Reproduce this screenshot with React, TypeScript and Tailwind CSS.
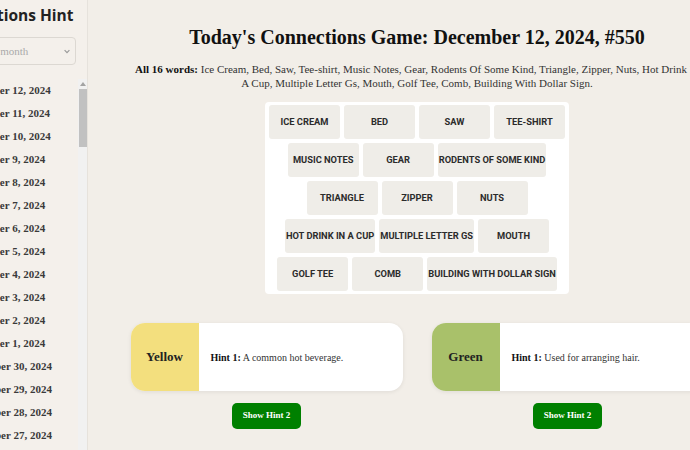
const dates = [
  "December 12, 2024",
  "December 11, 2024",
  "December 10, 2024",
  "December 9, 2024",
  "December 8, 2024",
  "December 7, 2024",
  "December 6, 2024",
  "December 5, 2024",
  "December 4, 2024",
  "December 3, 2024",
  "December 2, 2024",
  "December 1, 2024",
  "November 30, 2024",
  "November 29, 2024",
  "November 28, 2024",
  "November 27, 2024",
];

const rows = [
  ["Ice Cream", "Bed", "Saw", "Tee-shirt"],
  ["Music Notes", "Gear", "Rodents Of Some Kind"],
  ["Triangle", "Zipper", "Nuts"],
  ["Hot Drink In A Cup", "Multiple Letter Gs", "Mouth"],
  ["Golf Tee", "Comb", "Building With Dollar Sign"],
];

const hints = [
  { label: "Yellow", color: "bg-[#f3df7e]", hint: "A common hot beverage." },
  { label: "Green", color: "bg-[#a9c16a]", hint: "Used for arranging hair." },
];

const serif = "font-['Liberation_Serif',serif]";

function Sidebar() {
  return (
    <aside className="w-[88px] shrink-0 h-full overflow-hidden bg-[#f4f0eb] border-r border-[#e6e2dc]">
      <div className="w-[250px] -ml-[162px] h-full flex flex-col">
        <h2 className="pl-[102px] pt-[4px] h-[37px] whitespace-nowrap text-[15.5px] font-bold text-[#222] font-['Open_Sans',sans-serif]">
          Connections Hint
        </h2>
        <div className="pl-[110px] pr-[12px]">
          <div className={`h-[28px] rounded border border-[#dcd8d2] flex items-center justify-between pl-[14px] pr-[4px] text-[11px] text-[#aaa] ${serif}`}>
            <span>Select a month</span>
            <svg width="8" height="8" viewBox="0 0 10 10" fill="none" stroke="#999" strokeWidth="1.5">
              <path d="M2 4l3 3 3-3" />
            </svg>
          </div>
        </div>
        <div className="flex flex-1 mt-[14px] min-h-0">
          <ul className={`flex-1 pl-[124px] text-[11px] font-bold text-[#3a3a3a] ${serif}`}>
            {dates.map((d) => (
              <li key={d} className="h-[23px] leading-[23px] whitespace-nowrap">
                {d}
              </li>
            ))}
          </ul>
          <div className="w-[10px] bg-[#f1f1f1] flex flex-col items-center">
            <svg width="6" height="4" viewBox="0 0 6 4" className="mt-[3px]">
              <path d="M3 0l3 4H0z" fill="#a3a3a3" />
            </svg>
            <div className="w-[8px] h-[58px] mt-[3px] bg-[#c1c1c1]" />
          </div>
        </div>
      </div>
    </aside>
  );
}

function Tile({ word }: { word: string }) {
  return (
    <div className="min-w-[71px] h-[34px] px-[1px] rounded-[3px] bg-[#efede8] flex items-center justify-center whitespace-nowrap text-[9.3px] font-bold uppercase text-[#2b2b2b] font-['Roboto',sans-serif]">
      {word}
    </div>
  );
}

function HintCard({ label, color, hint }: { label: string; color: string; hint: string }) {
  return (
    <div className="flex flex-col items-center">
      <div className="w-full h-[68px] flex rounded-[14px] overflow-hidden bg-white shadow-[0_1px_4px_rgba(0,0,0,0.08)]">
        <div className={`w-[68px] shrink-0 ${color} flex items-center justify-center text-[13px] font-bold text-[#222]`}>
          {label}
        </div>
        <div className="flex items-center pl-[12px] text-[10px] text-[#333]">
          <p>
            <b className="text-[#111]">Hint 1:</b> {hint}
          </p>
        </div>
      </div>
      <button className="mt-[12px] w-[69px] h-[26px] rounded-[5px] bg-[#008000] text-white text-[9px] font-bold">
        Show Hint 2
      </button>
    </div>
  );
}

export default function App() {
  return (
    <div className={`w-[690px] h-[450px] overflow-hidden flex bg-[#f2eee8] ${serif}`}>
      <Sidebar />
      <main className="w-[658px] shrink-0 flex flex-col items-center pt-[24px]">
        <h1 className="text-[20px] font-bold text-[#111] leading-[26px]">
          Today's Connections Game: December 12, 2024, #550
        </h1>
        <p className="mt-[12px] w-[572px] text-center text-[11px] leading-[14px] text-[#333]">
          <b className="text-[#111]">All 16 words:</b> Ice Cream, Bed, Saw, Tee-shirt, Music Notes, Gear, Rodents Of Some Kind, Triangle, Zipper, Nuts, Hot Drink In A Cup, Multiple Letter Gs, Mouth, Golf Tee, Comb, Building With Dollar Sign.
        </p>
        <div className="mt-[12px] w-[304px] bg-white rounded-[4px] p-[3px] flex flex-col gap-[4px]">
          {rows.map((r, i) => (
            <div key={i} className="flex justify-center gap-[4px]">
              {r.map((w) => (
                <Tile key={w} word={w} />
              ))}
            </div>
          ))}
        </div>
        <div className="mt-[29px] w-[573px] grid grid-cols-2 gap-[29px]">
          {hints.map((h) => (
            <HintCard key={h.label} {...h} />
          ))}
        </div>
      </main>
    </div>
  );
}
